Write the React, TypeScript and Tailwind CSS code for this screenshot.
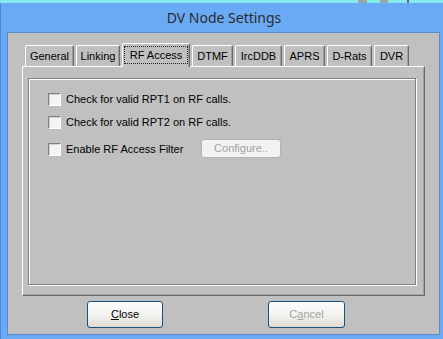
import React from "react"

const tabs = [
  { label: "General", cls: "ml-[3px] w-[49px]" },
  { label: "Linking", cls: "ml-[2px] w-[44px]" },
  { label: "RF Access", cls: "ml-[2px] w-[68px]", active: true },
  { label: "DTMF", cls: "ml-[2px] w-[41px]" },
  { label: "IrcDDB", cls: "ml-[2px] w-[47px]" },
  { label: "APRS", cls: "ml-[2px] w-[41px]" },
  { label: "D-Rats", cls: "ml-[2px] w-[45px]" },
  { label: "DVR", cls: "ml-[2px] w-[35px]" },
]

function Checkbox() {
  return (
    <div className="w-[13px] h-[13px] shrink-0 border-t border-l border-[#808080] border-r border-b border-r-white border-b-white bg-[#f4f4f4] shadow-[inset_1px_1px_0_#d4d4d4]" />
  )
}

function Tab({ label, cls, active }: { label: string; cls: string; active?: boolean }) {
  if (active) {
    return (
      <div
        className={`${cls} h-[24px] -mb-px relative z-10 bg-[#c0c0c0] border-t border-l border-white border-r border-r-[#6a6a6a] rounded-t-[2px] shadow-[inset_-1px_0_0_#a0a0a0] px-[1px] pt-[2px] pb-[2px]`}
      >
        <div className="h-[18px] border border-dotted border-[#202020] flex items-center justify-center">
          {label}
        </div>
      </div>
    )
  }
  return (
    <div
      className={`${cls} h-[21px] bg-[#c0c0c0] border-t border-l border-white border-r border-r-[#6a6a6a] rounded-t-[2px] shadow-[inset_-1px_0_0_#a0a0a0] flex items-center justify-center pt-[1px]`}
    >
      {label}
    </div>
  )
}

export default function App() {
  return (
    <div className="w-[443px] h-[339px] overflow-hidden bg-[#6aa9f4] flex flex-col font-['Liberation_Sans',Arial,sans-serif] text-[11px] text-black">
      {/* strip of desktop above the window */}
      <div className="h-[3px] bg-[#84eaf0] relative">
        <div className="absolute left-[358px] top-0 w-[9px] h-[3px] bg-[#9aa8a8]" />
        <div className="absolute left-[380px] top-0 w-[8px] h-[3px] bg-[#9aa8a8]" />
        <div className="absolute left-[407px] top-0 w-[2px] h-[3px] bg-[#5c6a6a]" />
      </div>

      <div className="flex-1 flex flex-col border-l border-[#4d89d2]">
        <div className="h-[29px] flex items-center justify-center pl-[4px] font-['Noto_Sans',sans-serif] text-[14px] text-[#2b2b2b]">
          DV Node Settings
        </div>

        <div className="ml-[6px] w-[433px] h-[303px] bg-[#c0c0c0] border border-[#5a8bc8] pl-[14px] pt-[10px]">
          <div className="flex items-end h-[23px]">
            {tabs.map((t) => (
              <Tab key={t.label} {...t} />
            ))}
          </div>

          <div className="w-[403px] h-[230px] border-t border-l border-white border-r border-b border-r-[#6a6a6a] border-b-[#6a6a6a] shadow-[inset_-1px_-1px_0_#a0a0a0] pl-[5px] pt-[11px]">
            <div className="w-[388px] h-[207px] border border-[#808080] shadow-[inset_1px_1px_0_#fff,1px_1px_0_#fff] pl-[19px] pt-[14px]">
              <div className="flex items-center h-[13px]">
                <Checkbox />
                <span className="ml-[5px]">Check for valid RPT1 on RF calls.</span>
              </div>
              <div className="flex items-center h-[13px] mt-[10px]">
                <Checkbox />
                <span className="ml-[5px]">Check for valid RPT2 on RF calls.</span>
              </div>
              <div className="flex items-center h-[13px] mt-[14px]">
                <Checkbox />
                <span className="ml-[5px] w-[135px]">Enable RF Access Filter</span>
                <button className="w-[80px] h-[19px] -mt-[2px] rounded-[3px] border border-[#a9b5c3] bg-[#f2f2f0] text-[#a3a3a3] flex items-center justify-center">
                  Configure..
                </button>
              </div>
            </div>
          </div>

          <div className="flex mt-[5px]">
            <button className="ml-[65px] w-[76px] h-[27px] rounded-[3px] border border-[#1c4f7e] bg-gradient-to-b from-[#fdfdfc] via-[#f4f3f0] to-[#dedbd2] flex items-center justify-center">
              <span>
                <span className="underline">C</span>lose
              </span>
            </button>
            <button className="ml-[105px] w-[77px] h-[27px] rounded-[3px] border border-[#1c4f7e] bg-gradient-to-b from-[#fdfdfc] via-[#f4f3f0] to-[#dedbd2] flex items-center justify-center text-[#a3a3a3]">
              <span>
                C<span className="underline">a</span>ncel
              </span>
            </button>
          </div>
        </div>
      </div>
    </div>
  )
}
